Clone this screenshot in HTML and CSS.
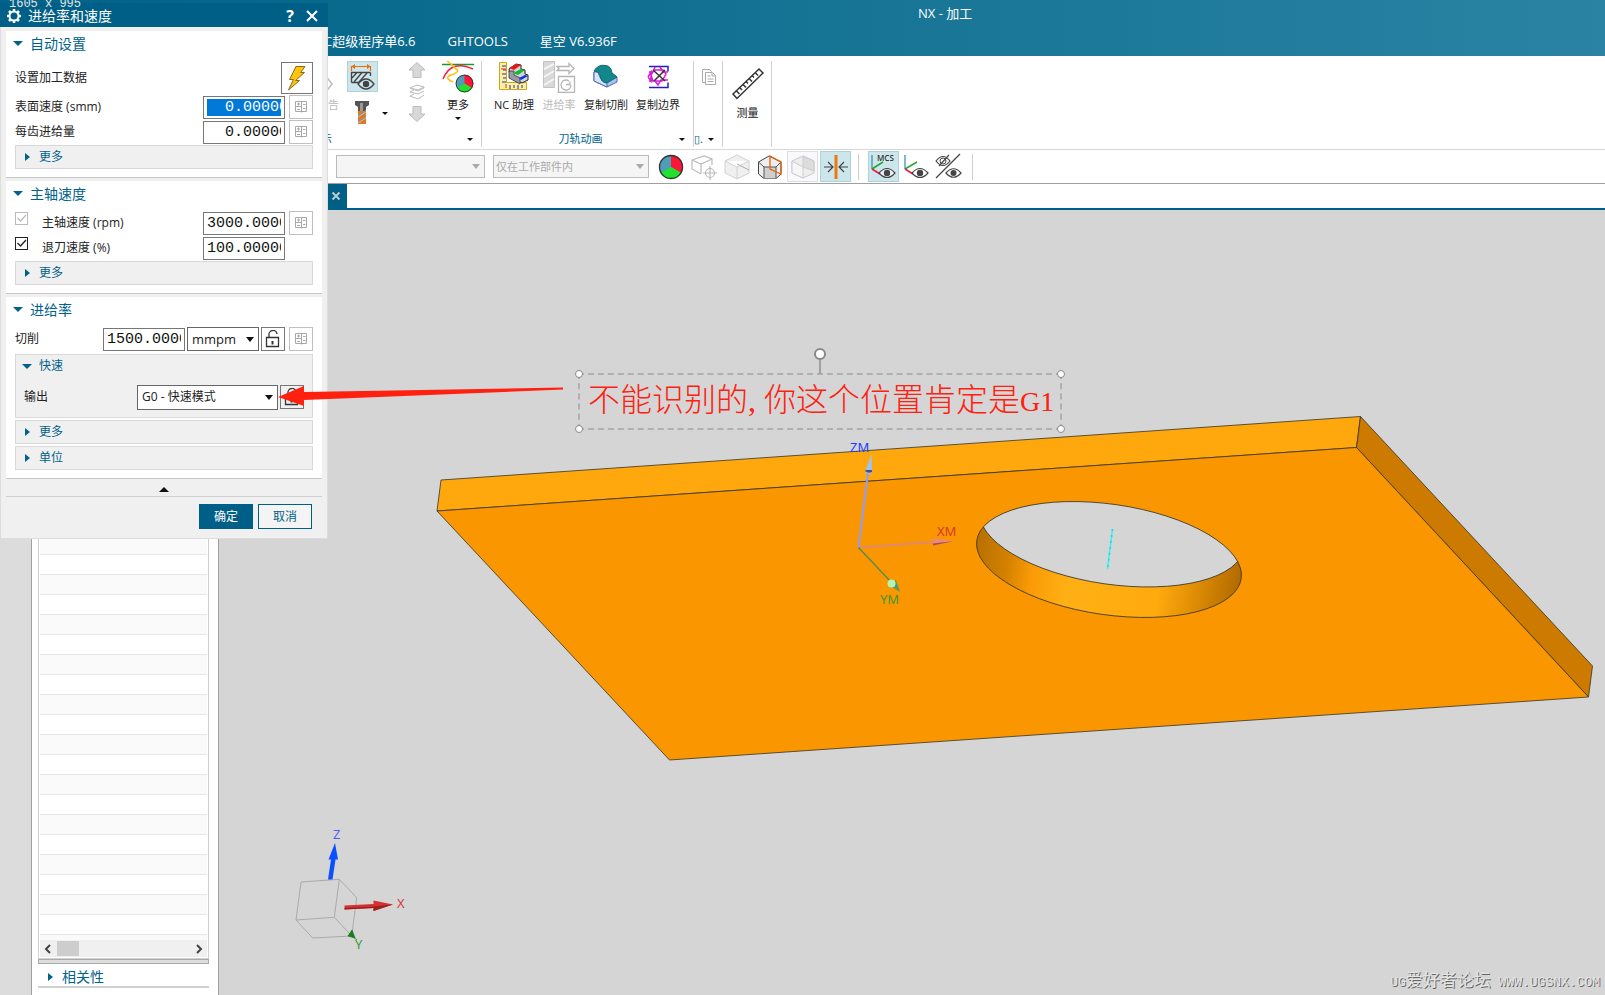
FILE: index.html
```html
<!DOCTYPE html>
<html lang="zh-CN">
<head>
    <meta charset="UTF-8">
    <meta name="viewport" content="width=device-width, initial-scale=1.0">
    <title>NX - 加工</title>
    <link rel="stylesheet" href="styles.css">
</head>
<body>
    <!-- Shared icons -->
    <svg class="icon-defs" width="0" height="0" aria-hidden="true">
        <symbol id="icon-expr" viewBox="0 0 14 14">
            <path d="M1.500 1.500h11v10h-11zM7.500 1.500v11M1.500 6.500h6M3 4h3M4.500 2.500v3M3 9.500h3M9 4.500h2.500M9 8.500h2.500" fill="none" stroke="currentColor"/>
        </symbol>
        <symbol id="icon-lock" viewBox="0 0 16 18">
            <path d="M1.500 7.500h12v9h-12zM4 7.500V5a4 4 0 0 1 8-1" fill="none" stroke="#333" stroke-width="1.300"/>
            <path d="M6.500 11h2v3.500h-2z" fill="#333"/>
        </symbol>
        <symbol id="icon-eye" viewBox="0 0 18 12">
            <path d="M1 6Q9-3 17 6Q9 15 1 6z" fill="#fff" fill-opacity=".6" stroke="#444" stroke-width="1.200"/>
            <circle cx="9" cy="6" r="3.200" fill="#444"/>
        </symbol>
        <symbol id="icon-pie" viewBox="0 0 26 26">
            <circle cx="13" cy="13" r="12" fill="#4f9db8"/>
            <path d="M13 13V1A12 12 0 0 1 23.400 19z" fill="#ff1538"/>
            <path d="M13 13L23.400 19A12 12 0 0 1 2.600 19z" fill="#22e02e"/>
            <circle cx="13" cy="13" r="11.500" fill="none" stroke="#333" stroke-width="1.300"/>
        </symbol>
    </svg>

    <div class="app">
        <header class="header">
            <div class="title-bar">NX - 加工</div>
            <nav class="tabs">
                <a href="#">C超级程序单6.6</a>
                <a href="#">GHTOOLS</a>
                <a href="#">星空 V6.936F</a>
            </nav>
        </header>

        <!-- Ribbon -->
        <div class="ribbon">
            <div class="ribbon-group group-display">
                <div class="tools">
                    <button class="tool tool-report disabled">
                        <svg width="32" height="32" viewBox="0 0 32 32"><path d="M14 19h10v-5l7 9-7 9v-5H14M22 7v6" fill="none" stroke="#bbb" stroke-width="1.500"/></svg>
                        <span>报告</span>
                    </button>
                    <div class="tool-column">
                        <button class="tile active" aria-label="显示毛坯">
                            <svg width="31" height="31" viewBox="0 0 31 31">
                                <path d="M5 5.500h18M4.500 5v5M23.500 5v5" fill="none" stroke="#ed6b00" stroke-width="1.200"/>
                                <path d="M8 3L4.500 5.500 8 8zM20 3l3.500 2.500L20 8z" fill="#ed6b00"/>
                                <path d="M4.500 21.500v-10h19M4.500 21.500H12M23.500 11.500V15M5 17l5-5.500M7 21l8-9.500M12 21l8-9" fill="none" stroke="#444" stroke-width="1.300"/>
                                <path d="M11 23Q19 13 27 23Q19 33 11 23z" fill="#cfe8ee" stroke="#444" stroke-width="1.300"/>
                                <circle cx="19" cy="23" r="3.200" fill="#444"/>
                            </svg>
                        </button>
                        <button class="tool-split" aria-label="刀具显示">
                            <svg width="16" height="26" viewBox="0 0 16 26">
                                <path d="M1 1h14v4l-3 2v5H4V7L1 5z" fill="#555"/>
                                <path d="M6 3h3v9H6z" fill="#999"/>
                                <path d="M4 11h8v13H4z" fill="#e8761a"/>
                                <path d="M4 15l8-5v3l-8 5zM4 21l8-5v3l-8 5z" fill="#8b9299"/>
                                <path d="M4 17l8-5M4 23l8-5" stroke="#ffb070"/>
                            </svg>
                            <i class="caret"></i>
                        </button>
                    </div>
                    <div class="tool-column arrows">
                        <button aria-label="上移"><svg width="18" height="16" viewBox="0 0 18 16"><path d="M9 .5L17 8h-4v7.500H5V8H1z" fill="#d8d8d8" stroke="#bbb"/></svg></button>
                        <button aria-label="刀路层"><svg width="18" height="16" viewBox="0 0 18 16"><path d="M2 4l7-3 7 2-6 3zM2 8l4-2M16 7l-6 3-8-2M16 11l-6 4-8-3 4-2M16 3v1l-6 3-8-3" fill="none" stroke="#bbb"/></svg></button>
                        <button aria-label="下移"><svg width="18" height="16" viewBox="0 0 18 16"><path d="M9 15.500L17 8h-4V.500H5V8H1z" fill="#d8d8d8" stroke="#bbb"/></svg></button>
                    </div>
                    <button class="tool tool-more">
                        <svg width="32" height="32" viewBox="0 0 32 32">
                            <path d="M0 3.500h32" stroke="#169a2f" stroke-width="1.500"/>
                            <path d="M1 18Q9-2 31 8" fill="none" stroke="#ff1744" stroke-width="1.500"/>
                            <path d="M5 0Q11 4 14 8Q18 10 12 13Q0 16 11 21" fill="none" stroke="#ffc107" stroke-width="1.500"/>
                            <use href="#icon-pie" x="13" y="13" width="19" height="19"/>
                        </svg>
                        <span>更多</span>
                        <i class="caret"></i>
                    </button>
                </div>
                <div class="group-label"><span>显示</span><i class="caret"></i></div>
            </div>

            <div class="ribbon-group group-animation">
                <div class="tools">
                    <button class="tool">
                        <svg width="32" height="32" viewBox="0 0 32 32">
                            <path d="M1.500 1.500h7v20h20v7h-27z" fill="#fff0a0" stroke="#c8a820"/>
                            <path d="M4 5h4M5 9h3M4 13h4M5 17h3M4 21h4M12 24v4M16 24v3M20 24v4M24 24v3" stroke="#2030b0"/>
                            <path d="M3 8h5M8 23v4" stroke="#e22"/>
                            <path d="M11 8l7-5 5 1v4l4 1v4l3 1v5l-6 3-12-6z" fill="#d4d4dc" stroke="#222"/>
                            <path d="M11 10v7l11 6v-6l-6-3v-4z" fill="#9a9aa6" stroke="#333" stroke-width=".8"/>
                            <path d="M11 7l7-4 5 1-7 5z" fill="#e81818"/><path d="M15 12l8-4 4 1-7 5z" fill="#18b830"/><path d="M21 17l6-3 3 1-7 4z" fill="#1030e0"/>
                        </svg>
                        <span>NC 助理</span>
                    </button>
                    <button class="tool disabled">
                        <svg width="34" height="32" viewBox="0 0 34 32">
                            <path d="M1.500.500h11v26h-11z" fill="#d8d8d8" stroke="#c2c2c2"/>
                            <path d="M2 8l10-5M2 16l10-6M2 24l10-6" stroke="#f4f4f4" stroke-width="2"/>
                            <path d="M15 5.500h12V2.500l5 5-5 5v-3H15l2-2zM16.500 15.500h16v16h-16z" fill="#fff" stroke="#b5b5b5" stroke-width="1.300"/>
                            <path d="M27 20a5 5 0 1 0 2 4M24 23.500h4v-3" fill="none" stroke="#b5b5b5" stroke-width="1.300"/>
                        </svg>
                        <span>进给率</span>
                    </button>
                    <button class="tool">
                        <svg width="32" height="32" viewBox="0 0 32 32">
                            <path d="M4 11v9l13 6 10-5v-5l-8-6z" fill="#a9c0f0" stroke="#5068b8"/>
                            <path d="M4 11Q8 10 9 14Q12 22 17 22v4L4 20z" fill="#d5e3ff" stroke="#5068b8"/>
                            <path d="M4 10Q8 3 16 4.500Q21 5 22 12L27 16 17 22Q11 22 10 14Q9 10 4 10z" fill="#13888c" stroke="#106c70"/>
                        </svg>
                        <span>复制切削</span>
                    </button>
                    <button class="tool">
                        <svg width="32" height="32" viewBox="0 0 32 32">
                            <path d="M7 5.500h19v5M7 26.500h19v-5" fill="none" stroke="#2020c0" stroke-width="1.500"/>
                            <path d="M7 11h4l2-5M26 11h-5l-3-5M7 20h6l3 4 3-5h7M6 16l3-5v9l-3-4M12 9h9l3 4-4 7h-9l-2-6z" fill="none" stroke="#d81bd8" stroke-width="1.500"/>
                            <path d="M11 9l12 11M23 9L12 20" stroke="#333" stroke-width="1.500"/>
                        </svg>
                        <span>复制边界</span>
                    </button>
                </div>
                <div class="group-label centered"><span>刀轨动画</span><i class="caret"></i></div>
            </div>

            <div class="ribbon-group group-small">
                <div class="tools">
                    <button class="tool" aria-label="加工文档">
                        <svg width="16" height="32" viewBox="0 0 16 32"><path d="M4.500 21.500h-3v-13h7l2 2M4.500 11.500h7l3 3v9h-10zM11 11.500v3.500h3M6.500 15h3M6.500 18h6M6.500 20.500h6" fill="none" stroke="#aaa"/></svg>
                    </button>
                </div>
                <div class="group-label"><span>▯.</span><i class="caret"></i></div>
            </div>

            <div class="ribbon-group group-measure">
                <div class="tools">
                    <button class="tool">
                        <svg width="34" height="34" viewBox="0 0 34 34">
                            <path d="M2 27L28 2l4 4L6 31.500zM5.500 24l3 3M9 21l2 2M12 17.500l3 3M15 14.500l2 2M18 11.500l3 3M21 8.500l2 2M24 5.500l3 3" fill="none" stroke="#333" stroke-width="1.500"/>
                        </svg>
                        <span>测量</span>
                    </button>
                </div>
            </div>
        </div>

        <!-- Selection bar -->
        <div class="selection-bar">
            <select class="filter" aria-label="类型过滤器" disabled><option></option></select>
            <select class="filter scope" aria-label="选择范围" disabled><option>仅在工作部件内</option></select>
            <div class="tile-row">
                <button class="tile" aria-label="颜色"><svg width="26" height="26"><use href="#icon-pie"/></svg></button>
                <button class="tile" aria-label="定向视图">
                    <svg width="26" height="26" viewBox="0 0 26 26" fill="none" stroke="#bbb" stroke-width="1.200"><path d="M1 6l12-4 8 3v6M1 6v9l9 5M1 6l9 4 11-5M10 10v10"/><circle cx="19" cy="19" r="4.500"/><path d="M19 12v14M12 19h14"/></svg>
                </button>
                <button class="tile" aria-label="着色">
                    <svg width="26" height="26" viewBox="0 0 26 26" fill="#f0f0f0" stroke="#d0d0d0"><path d="M1 7l12-6 12 6v12l-12 6-12-6zM1 7l12 6 12-6M13 13v12"/><path d="M13 10l12 6" stroke="#aaa"/></svg>
                </button>
                <button class="tile" aria-label="带边着色">
                    <svg width="26" height="26" viewBox="0 0 26 26"><path d="M1.500 8L12 2l12 6v12l-5 4.500H7L1.500 20z" fill="#eee" stroke="#444"/><path d="M7 13h12v11.500H7z" fill="#cfcfcf"/><path d="M1.500 8L7 13h12l5-5M7 13v11M19 13v11" fill="none" stroke="#555"/><path d="M13 2v13l11 5V8z" fill="none" stroke="#e8630a" stroke-width="1.300"/></svg>
                </button>
                <button class="tile framed" aria-label="透明显示">
                    <svg width="26" height="26" viewBox="0 0 26 26" fill="#eee" stroke="#ccc"><path d="M2 7l11-5 11 5v12l-11 5-11-5z"/><path d="M2 7l11 6v11L2 19z" fill="#f6f6f6"/><path d="M13 2l11 5v10l-11-4z" fill="#dcdcdc"/></svg>
                </button>
                <button class="tile active" aria-label="剪切截面">
                    <svg width="26" height="26" viewBox="0 0 26 26"><path d="M11.500 1h3v24h-3z" fill="#ed7a11"/><path d="M1 13h9M5 8l5 5-5 5M25 13h-9M21 8l-5 5 5 5" fill="none" stroke="#444" stroke-width="1.200"/></svg>
                </button>
            </div>
            <span class="divider"></span>
            <div class="tile-row">
                <button class="tile active" aria-label="显示 MCS">
                    <svg width="31" height="31" viewBox="0 0 31 31"><path d="M4 4v14" stroke="#3a96ad" stroke-width="1.300"/><path d="M4 18l11-7" stroke="#1faa32" stroke-width="1.500"/><path d="M4 18l8 5" stroke="#ee1c3c" stroke-width="1.500"/><use href="#icon-eye" x="10" y="16" width="18" height="12"/><text class="mcs-text" x="9" y="10">MCS</text></svg>
                </button>
                <button class="tile" aria-label="显示坐标系">
                    <svg width="31" height="31" viewBox="0 0 31 31"><path d="M4 4v14" stroke="#3a96ad" stroke-width="1.300"/><path d="M4 18l12-7" stroke="#1faa32" stroke-width="1.500"/><path d="M4 18l8 5" stroke="#ee1c3c" stroke-width="1.500"/><use href="#icon-eye" x="10" y="16" width="18" height="12"/></svg>
                </button>
                <button class="tile" aria-label="显示和隐藏">
                    <svg width="31" height="31" viewBox="0 0 31 31"><use href="#icon-eye" x="11" y="16" width="17" height="12"/><path d="M2 10Q9 1 16 10Q9 19 2 10zM5 15L15 4" fill="none" stroke="#444" stroke-width="1.200"/><circle cx="9" cy="10" r="3" fill="none" stroke="#444"/><path d="M2 27L26 3" stroke="#444" stroke-width="1.300"/></svg>
                </button>
            </div>
            <span class="divider"></span>
        </div>

        <div class="document-tabs">
            <button class="tab-close" aria-label="关闭"><svg width="10" height="10" viewBox="0 0 10 10"><path d="M1.500 1.500l7 7M8.500 1.500l-7 7" stroke="#b8cbd4" stroke-width="2"/></svg></button>
        </div>

        <main class="workspace">
            <aside class="navigator">
                <div class="nav-list">
                    <div class="nav-scroll">
                        <button aria-label="向左滚动"><svg width="8" height="10" viewBox="0 0 8 10"><path d="M6 1L2 5l4 4" fill="none" stroke="#444" stroke-width="2"/></svg></button>
                        <span class="nav-thumb"></span>
                        <button aria-label="向右滚动"><svg width="8" height="10" viewBox="0 0 8 10"><path d="M2 1l4 4-4 4" fill="none" stroke="#444" stroke-width="2"/></svg></button>
                    </div>
                </div>
                <div class="nav-splitter"></div>
                <button class="nav-section"><i class="arrow-right"></i>相关性</button>
            </aside>

            <!-- Graphics view -->
            <svg class="viewport" viewBox="219 210 1386 785" preserveAspectRatio="xMinYMin meet">
                <defs>
                    <linearGradient id="wall">
                        <stop offset="0" stop-color="#b87000"/>
                        <stop offset=".12" stop-color="#d28000"/>
                        <stop offset=".22" stop-color="#fa9a06"/>
                        <stop offset=".36" stop-color="#ffb014"/>
                        <stop offset=".7" stop-color="#ffaa0e"/>
                        <stop offset=".85" stop-color="#dc8a04"/>
                        <stop offset="1" stop-color="#b06a00"/>
                    </linearGradient>
                    <clipPath id="hole"><ellipse cx="1109" cy="559.500" rx="133.600" ry="55.300" transform="rotate(8.200 1109 559.500)"/></clipPath>
                </defs>

                <!-- Plate -->
                <g stroke="#33332a" stroke-width=".8" stroke-linejoin="round">
                    <path d="M441 480L1360.500 416.500 1356.500 447.500 437 511z" fill="#ffa80e"/>
                    <path d="M1360.500 416.500L1592.500 666 1588.500 697 1356.500 447.500z" fill="#cc7a00"/>
                    <path d="M437 511L1356.500 447.500 1588.500 697 669.500 760z" fill="#fa9600"/>
                    <ellipse cx="1109" cy="559.500" rx="133.600" ry="55.300" transform="rotate(8.200 1109 559.500)" fill="url(#wall)" stroke="none"/>
                    <g clip-path="url(#hole)">
                        <ellipse cx="1112" cy="529" rx="133.600" ry="55.300" transform="rotate(8.200 1112 529)" fill="#d5d5d5"/>
                    </g>
                    <ellipse cx="1109" cy="559.500" rx="133.600" ry="55.300" transform="rotate(8.200 1109 559.500)" fill="none"/>
                </g>
                <path d="M1112.500 529L1107.500 569" stroke="#40f0f0" stroke-width="1.500"/>
                <path d="M1112.500 529L1107.500 569" stroke="#00e0e8" stroke-width="1.500" stroke-dasharray="2 4"/>

                <!-- Machine coordinate system -->
                <path d="M858.500 547.500L868 472" stroke="#8c9cff" stroke-width="2"/>
                <path d="M871.500 454L865 472q3 3 7 1z" fill="#9cc4f8"/>
                <path d="M865 471q3 3 7 1v-2h-6z" fill="#3c5488"/>
                <path d="M858.500 547.500L934 542" stroke="#e08a70" stroke-width="2"/>
                <path d="M954 541L933 538.500v7z" fill="#ec8a80"/>
                <path d="M933 545.500v-2l21-2.500z" fill="#a84c40"/>
                <path d="M858.500 547.500L891 582" stroke="#5c8c48" stroke-width="1.500"/>
                <path d="M900 592L889 585l7-5z" fill="#5c9468"/>
                <circle cx="891.500" cy="583.500" r="4" fill="#b4f4b4"/>
                <g class="axis-label">
                    <text x="850" y="452" fill="#1c3cff">ZM</text>
                    <text x="937" y="536" fill="#d43a30">XM</text>
                    <text x="880" y="604" fill="#3c9a30">YM</text>
                </g>

                <!-- View triad -->
                <path d="M301 882L339.300 879.300 334.300 917.300 296 920zM339.300 879.300L356.700 897.700 351.700 936 334.300 917.300M351.700 936L312.700 938 296 920" fill="none" stroke="#aaa"/>
                <path d="M328 879.500h4.500l3-20h2.500L335 843l-6.500 16.500h2.500z" fill="#0a50ff"/>
                <path d="M344.500 905.500L373.500 904v-3.500L393 904.500 373.500 911v-3L344.500 909.500z" fill="#d83030"/>
                <path d="M344.500 908L373.500 906.500 393 904.500 373.500 911v-3L344.500 909.500z" fill="#9c2020"/>
                <path d="M352 930l3 8-7-2zM352 936l5 4" fill="#1c7c24" stroke="#1c7c24" stroke-width=".8"/>
                <g class="axis-label">
                    <text x="333" y="839" fill="#4c60ff">Z</text>
                    <text x="397" y="908" fill="#d43a3a">X</text>
                    <text x="355" y="949" fill="#3c9a3c">Y</text>
                </g>
            </svg>
            <div class="watermark"><span>UG</span>爱好者论坛<span> WWW.UGSNX.COM</span></div>
        </main>
    </div>

    <!-- Feeds and speeds dialog -->
    <form class="dialog">
        <div class="dialog-title">
            <svg width="16" height="16" viewBox="0 0 16 16"><circle cx="8" cy="8" r="4.500" fill="none" stroke="#fff" stroke-width="2"/><path d="M8 1v2M8 13v2M1 8h2M13 8h2M3 3l1.500 1.500M11.500 11.500L13 13M3 13l1.500-1.500M11.500 4.500L13 3" stroke="#fff" stroke-width="2.500"/></svg>
            <span>进给率和速度</span>
            <button type="button" class="help" aria-label="帮助">?</button>
            <button type="button" aria-label="关闭"><svg width="12" height="12" viewBox="0 0 12 12"><path d="M1 1l10 10M11 1L1 11" stroke="#fff" stroke-width="2"/></svg></button>
        </div>

        <section class="section">
            <h2><i class="arrow-down"></i>自动设置</h2>
            <div class="row row-tall">
                <span class="label">设置加工数据</span>
                <button type="button" class="bolt" aria-label="设置加工数据">
                    <svg width="22" height="26" viewBox="0 0 22 26"><path d="M10 1.500h9l-4.500 6h4L9.500 15.500h4L2.500 25l5-10.500H3.500L7 7.500z" fill="#ffc40c" stroke="#8c6a14"/></svg>
                </button>
            </div>
            <div class="row">
                <label for="surface">表面速度 (smm)</label>
                <input type="text" id="surface" class="number selected" value="  0.00000">
                <button type="button" class="mini dim" aria-label="表达式"><svg width="14" height="14"><use href="#icon-expr"/></svg></button>
            </div>
            <div class="row">
                <label for="tooth">每齿进给量</label>
                <input type="text" id="tooth" class="number" value="  0.00000">
                <button type="button" class="mini dim" aria-label="表达式"><svg width="14" height="14"><use href="#icon-expr"/></svg></button>
            </div>
            <button type="button" class="expander"><i class="arrow-right"></i>更多</button>
        </section>

        <section class="section">
            <h2><i class="arrow-down"></i>主轴速度</h2>
            <div class="row">
                <input type="checkbox" id="spindle-on" checked disabled>
                <label for="spindle-on">主轴速度 (rpm)</label>
                <input type="text" class="number" aria-label="主轴速度" value="3000.00000">
                <button type="button" class="mini dim" aria-label="表达式"><svg width="14" height="14"><use href="#icon-expr"/></svg></button>
            </div>
            <div class="row">
                <input type="checkbox" id="retract-on" checked>
                <label for="retract-on">退刀速度 (%)</label>
                <input type="text" class="number" aria-label="退刀速度" value="100.00000">
                <span class="mini-space"></span>
            </div>
            <button type="button" class="expander"><i class="arrow-right"></i>更多</button>
        </section>

        <section class="section">
            <h2><i class="arrow-down"></i>进给率</h2>
            <div class="row row-cut">
                <label for="cut">切削</label>
                <input type="text" id="cut" class="number" value="1500.00000">
                <select class="unit" aria-label="单位"><option>mmpm</option></select>
                <button type="button" class="mini" aria-label="锁定"><svg width="16" height="18"><use href="#icon-lock"/></svg></button>
                <button type="button" class="mini dim" aria-label="表达式"><svg width="14" height="14"><use href="#icon-expr"/></svg></button>
            </div>
            <div class="subgroup">
                <h3><i class="arrow-down"></i>快速</h3>
                <div class="row row-cut">
                    <label for="output">输出</label>
                    <select id="output" class="output"><option>G0 - 快速模式</option></select>
                    <button type="button" class="mini" aria-label="锁定"><svg width="16" height="18"><use href="#icon-lock"/></svg></button>
                </div>
            </div>
            <button type="button" class="expander"><i class="arrow-right"></i>更多</button>
            <button type="button" class="expander"><i class="arrow-right"></i>单位</button>
        </section>

        <button type="button" class="collapse" aria-label="收起"><i class="arrow-up"></i></button>
        <div class="actions">
            <button type="submit" class="primary">确定</button>
            <button type="button">取消</button>
        </div>
    </form>

    <div class="size-tip">1605 x 995</div>

    <!-- Red markup -->
    <svg class="pointer" width="286" height="22" viewBox="0 0 286 22"><path d="M0 12L26 1v6L285 2.500v2L26 15v6z" fill="#ff2010"/></svg>
    <div class="markup">
        <span class="rotate-handle"></span>
        <span class="handle top-left"></span>
        <span class="handle top-right"></span>
        <span class="handle bottom-left"></span>
        <span class="handle bottom-right"></span>
        不能识别的<span class="comma">,</span>你这个位置肯定是<span class="code">G1</span>
    </div>
</body>
</html>
```
FILE: styles.css
```css
/* Global Styles */
* {
    box-sizing: border-box;
}

body {
    margin: 0;
    font-family: "Open Sans", "Noto Sans CJK SC", sans-serif;
    font-size: 12px;
    line-height: 16px;
    color: #222;
    background: #d5d5d5;
    overflow: hidden;
}

button,
input,
select {
    font: inherit;
    color: inherit;
    margin: 0;
}

button {
    padding: 0;
    border: none;
    background: none;
    cursor: pointer;
}

svg {
    display: block;
}

.icon-defs {
    position: absolute;
}

.app {
    display: flex;
    flex-direction: column;
    height: 100vh;
}

/* Header */
.header {
    flex: none;
    height: 56px;
    background: linear-gradient(to right, #00628a, #0d6d8f 30%, #2a83a3);
    color: #fff;
}

.title-bar {
    padding: 5px 0 0 57.2%;
    height: 33px;
    font-size: 13px;
}

.tabs {
    display: flex;
    gap: 32px;
    padding-left: 324px;
    font-size: 13px;
}

.tabs a {
    color: #fff;
    text-decoration: none;
    white-space: nowrap;
}

/* Ribbon */
.ribbon {
    display: flex;
    flex: none;
    height: 94px;
    padding: 5px 0 2px 310px;
    background: #fff;
    border-bottom: 1px solid #d8d8d8;
    font-size: 11px;
}

.ribbon-group {
    display: flex;
    flex-direction: column;
    justify-content: space-between;
    border-right: 1px solid #d0d0d0;
}

.tools {
    display: flex;
    gap: 8px;
}

.tool {
    display: flex;
    flex-direction: column;
    align-items: center;
    white-space: nowrap;
}

.tool span {
    margin-top: 4px;
}

.tool.disabled {
    color: #bbb;
}

.tool-report {
    width: 29px;
    align-items: flex-end;
}

.tool-report svg {
    margin-right: 6px;
}

.group-display {
    width: 172px;
}

.tool-column {
    display: flex;
    flex-direction: column;
    gap: 8px;
    width: 44px;
}

.tool-split {
    display: flex;
    align-items: center;
    justify-content: space-between;
    padding: 0 3px 0 7px;
}

.arrows {
    width: 36px;
    align-items: center;
    gap: 6px;
    padding-top: 1px;
}

.tool-more {
    width: 30px;
}

.tool-more .caret {
    margin-top: 4px;
}

.group-animation {
    width: 212px;
}

.group-animation .tools {
    padding-left: 12px;
}

.group-small {
    width: 29px;
}

.group-small .tools {
    justify-content: center;
    padding-left: 1px;
}

.group-measure {
    width: 49px;
}

.group-measure .tools {
    justify-content: center;
    padding: 6px 0 0 1px;
}

.group-label {
    display: flex;
    align-items: center;
    justify-content: space-between;
    height: 16px;
    padding-right: 8px;
    color: #00628a;
}

.group-label.centered span {
    flex: 1;
    text-align: center;
}

.caret {
    width: 0;
    border: 3px solid transparent;
    border-top-color: #111;
    border-bottom: none;
}

/* Selection Bar */
.selection-bar {
    display: flex;
    align-items: center;
    flex: none;
    height: 34px;
    padding-left: 336px;
    background: #fff;
    border-bottom: 1px solid #a0a0a0;
}

select {
    appearance: none;
    border: 1px solid #666;
    border-radius: 0;
    background: #fff url("data:image/svg+xml,%3Csvg xmlns='http://www.w3.org/2000/svg' width='8' height='5'%3E%3Cpath d='M0 0h8L4 5z' fill='%23111'/%3E%3C/svg%3E") no-repeat right 4px center;
    padding: 0 16px 0 4px;
}

.filter {
    width: 149px;
    height: 23px;
    margin-right: 8px;
    padding-left: 2px;
    border-color: #bbb;
    background-color: #f5f5f5;
    background-image: url("data:image/svg+xml,%3Csvg xmlns='http://www.w3.org/2000/svg' width='8' height='5'%3E%3Cpath d='M0 0h8L4 5z' fill='%23aaa'/%3E%3C/svg%3E");
    color: #aaa;
    font-size: 11px;
    opacity: 1;
}

.scope {
    width: 156px;
    margin-right: 6px;
}

.tile-row {
    display: flex;
    gap: 2px;
}

.tile {
    display: flex;
    align-items: center;
    justify-content: center;
    width: 31px;
    height: 31px;
}

.tile.active {
    background: #cde6eb;
    box-shadow: inset 0 0 0 1px #acd2dc;
}

.tile.framed {
    background: #f8f9fd;
    box-shadow: inset 0 0 0 1px #ddd;
}

.mcs-text {
    font-size: 8px;
    font-weight: 600;
    fill: #333;
}

.divider {
    width: 1px;
    height: 26px;
    margin: 0 9px 0 7px;
    background: #ccc;
}

.document-tabs {
    display: flex;
    flex: none;
    height: 26px;
    padding-left: 328px;
    background: #fff;
    border-bottom: 2px solid #005f87;
}

.tab-close {
    display: flex;
    align-items: center;
    width: 19px;
    padding-left: 3px;
    background: #005f87;
}

/* Workspace */
.workspace {
    position: relative;
    display: flex;
    flex: 1;
    min-height: 0;
    padding-left: 31px;
    background: linear-gradient(to right, #dcdcdc 31px, #d5d5d5 31px);
}

.navigator {
    display: flex;
    flex-direction: column;
    flex: none;
    width: 188px;
    padding: 4px 9px 7px 6px;
    background: #fff;
    border: solid #a0a0a0;
    border-width: 0 1px;
}

.nav-list {
    display: flex;
    flex: 1;
    align-items: flex-end;
    padding: 0 1px 1px;
    border: 1px solid #d0d0d0;
    border-top: none;
    background: repeating-linear-gradient(#e6e6e6 0 1px, #fafafa 1px 20px, #e6e6e6 20px 21px, #fff 21px 40px) content-box;
}

.nav-scroll {
    display: flex;
    align-items: center;
    flex: 1;
    height: 17px;
    padding: 0 4px;
    background: #f0f0f0;
}

.nav-thumb {
    width: 22px;
    height: 15px;
    margin: 0 auto 0 5px;
    background: #cdcdcd;
}

.nav-splitter {
    height: 5px;
    background: #ddd;
    border: 1px solid #aaa;
}

.nav-section {
    display: flex;
    align-items: center;
    gap: 9px;
    height: 24px;
    padding: 3px 0 0 10px;
    border-bottom: 2px solid #d0d0d0;
    color: #00628a;
    font-size: 14px;
}

.viewport {
    flex: 1;
    min-width: 0;
    width: 100%;
    align-self: flex-start;
}

.axis-label {
    font-family: "Noto Sans", sans-serif;
    font-size: 13px;
}

.watermark {
    position: absolute;
    right: 5px;
    bottom: 3px;
    font-family: "Liberation Mono", "Noto Sans CJK SC", monospace;
    font-size: 17px;
    line-height: 18px;
    color: #e4e4e4;
    text-shadow: 1px 1px 0 #666;
    white-space: pre;
}

.watermark span {
    font-size: 13px;
}

/* Arrows */
.arrow-down,
.arrow-right,
.arrow-up {
    flex: none;
    border: 5px solid transparent;
}

.arrow-down {
    border-top-color: #00628a;
    border-bottom: none;
}

.arrow-right {
    border-width: 4px 0 4px 5px;
    border-left-color: #00628a;
}

.arrow-up {
    border-bottom-color: #111;
    border-top: none;
}

/* Dialog */
.dialog {
    position: absolute;
    left: 0;
    top: 3px;
    width: 328px;
    padding-bottom: 10px;
    background: #f0f0f0;
    box-shadow: inset -1px -1px #ddd, inset 1px 0 #ddd;
}

.dialog-title {
    display: flex;
    align-items: center;
    gap: 6px;
    height: 24px;
    margin-bottom: 4px;
    padding: 1px 10px 0 6px;
    background: #005f87;
    color: #fff;
    font-size: 14px;
}

.dialog-title .help {
    margin: 0 6px 0 auto;
    font-size: 16px;
    font-weight: 700;
}

.section {
    display: flex;
    flex-direction: column;
    gap: 1px;
    margin: 0 6px 3px;
    padding: 0 9px 8px;
    background: #fff;
    border-bottom: 1px solid #c8c8c8;
}

.section h2,
.subgroup h3 {
    display: flex;
    align-items: center;
    margin: 0;
    color: #00628a;
    font-weight: 400;
}

.section h2 {
    gap: 7px;
    height: 29px;
    margin-left: -2px;
    padding-bottom: 4px;
    font-size: 14px;
}

.row {
    display: flex;
    align-items: center;
    gap: 4px;
    height: 24px;
}

.row-tall {
    height: 33px;
}

.row-cut {
    gap: 2px;
}

.row label,
.row .label {
    flex: 1;
    white-space: nowrap;
}

.row-cut .dim {
    margin-left: 2px;
}

.number {
    width: 82px;
    height: 23px;
    padding: 2px 3px;
    border: 1px solid #777;
    background: #fff;
    font-family: "Liberation Mono", monospace;
    font-size: 15px;
    color: #111;
}

.number.selected {
    background: #0078d7 content-box;
    color: #fff;
}

.bolt {
    display: flex;
    align-items: center;
    justify-content: center;
    width: 32px;
    height: 32px;
    border: 1px solid #777;
}

.mini {
    display: flex;
    align-items: center;
    justify-content: center;
    width: 24px;
    height: 24px;
    border: 1px solid #777;
}

.mini.dim {
    border-color: #c0c0c0;
    color: #a8a8a8;
}

.mini-space {
    width: 24px;
}

.unit {
    width: 72px;
    height: 24px;
    font-size: 13px;
}

.output {
    width: 141px;
    height: 25px;
}

input[type="checkbox"] {
    appearance: none;
    align-self: flex-start;
    width: 13px;
    height: 13px;
    margin: 1px 10px 0 0;
    border: 1px solid #222;
    background: #fff url("data:image/svg+xml,%3Csvg xmlns='http://www.w3.org/2000/svg' width='11' height='11'%3E%3Cpath d='M1.500 5l3 3 5.500-6' fill='none' stroke='%23222' stroke-width='1.300'/%3E%3C/svg%3E");
}

input[type="checkbox"]:disabled {
    border-color: #bbb;
    background-image: url("data:image/svg+xml,%3Csvg xmlns='http://www.w3.org/2000/svg' width='11' height='11'%3E%3Cpath d='M1.500 5l3 3 5.500-6' fill='none' stroke='%23bbb' stroke-width='1.300'/%3E%3C/svg%3E");
}

.expander {
    display: flex;
    align-items: center;
    gap: 9px;
    height: 24px;
    padding-left: 9px;
    background: #f0f0f0;
    border: 1px solid #d8d8d8;
    color: #00628a;
}

.expander + .expander {
    margin-top: 1px;
}

.subgroup {
    height: 64px;
    margin: 2px 0 1px;
    padding: 0 8px;
    background: #f0f0f0;
    border: 1px solid #d8d8d8;
}

.subgroup h3 {
    gap: 7px;
    height: 22px;
    margin: 0 0 8px -2px;
    font-size: 12px;
}

.collapse {
    display: flex;
    align-items: center;
    justify-content: center;
    width: 316px;
    height: 15px;
    margin: 0 6px 7px;
    border-bottom: 1px solid #d0d0d0;
}

.actions {
    display: flex;
    justify-content: flex-end;
    gap: 5px;
    padding-right: 16px;
}

.actions button {
    width: 54px;
    height: 25px;
    border: 1px solid #005f87;
    background: #f4f4f4;
    color: #005f87;
}

.actions .primary {
    background: #005f87;
    color: #fff;
}

.size-tip {
    position: absolute;
    left: 9px;
    top: -4px;
    font-family: "Liberation Mono", monospace;
    font-size: 12px;
    color: #e4e4e4;
}

/* Markup */
.pointer {
    position: absolute;
    left: 278px;
    top: 385px;
}

.markup {
    position: absolute;
    left: 578px;
    top: 373px;
    width: 484px;
    height: 57px;
    padding-left: 8px;
    border: 2px dashed #b0b0b0;
    font-family: "Liberation Serif", "Noto Sans CJK SC", serif;
    font-size: 32px;
    font-weight: 300;
    line-height: 51px;
    color: #ff2010;
    white-space: nowrap;
}

.comma {
    padding-right: 8px;
}

.code {
    font-size: 28px;
}

.handle,
.rotate-handle {
    position: absolute;
    width: 8px;
    height: 8px;
    border: 1px solid #888;
    border-radius: 50%;
    background: #fff;
}

.top-left {
    left: -5px;
    top: -5px;
}

.top-right {
    right: -5px;
    top: -5px;
}

.bottom-left {
    left: -5px;
    bottom: -5px;
}

.bottom-right {
    right: -5px;
    bottom: -5px;
}

.rotate-handle {
    left: 50%;
    top: -27px;
    width: 12px;
    height: 12px;
    margin-left: -6px;
    border-width: 2px;
}

.rotate-handle::after {
    content: '';
    position: absolute;
    left: 3px;
    top: 10px;
    width: 2px;
    height: 14px;
    background: #a0a0a0;
}
```
